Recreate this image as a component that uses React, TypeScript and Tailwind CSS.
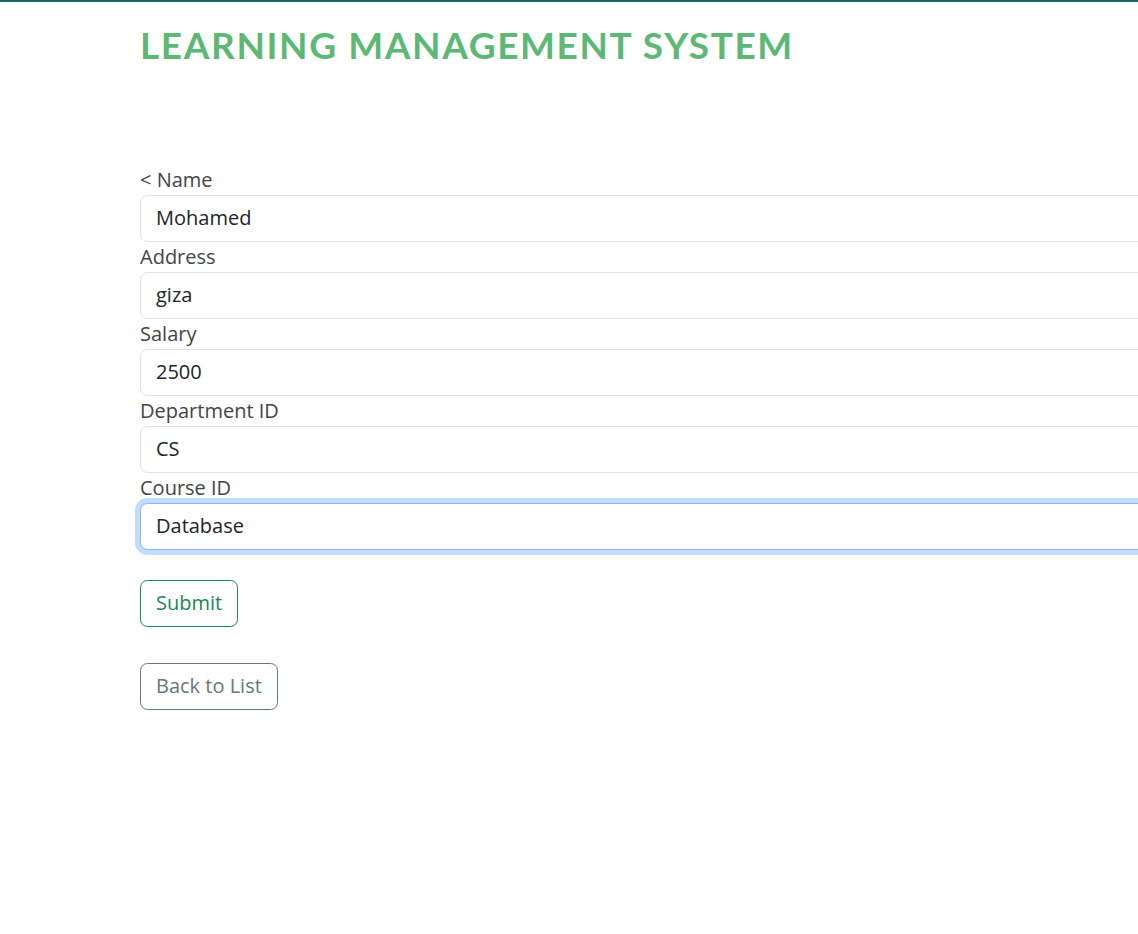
import React from "react";

const fields = [
  { label: "< Name", value: "Mohamed" },
  { label: "Address", value: "giza" },
  { label: "Salary", value: "2500" },
  { label: "Department ID", value: "CS" },
  { label: "Course ID", value: "Database", focus: true },
];

export default function App() {
  return (
    <div className="min-h-[934px] w-[1138px] overflow-hidden bg-white font-['Open_Sans',sans-serif] text-[20px] text-[#212529]">
      <div className="h-[2px] bg-[#1b6660]" />
      <div className="pl-[140px]">
        <h1 className="m-0 pt-[19px] font-['Lato',sans-serif] text-[37px] font-bold leading-[48px] tracking-[1.6px] text-[#5cb874]">
          LEARNING MANAGEMENT SYSTEM
        </h1>
        <form className="mt-[96px] w-[1100px]" onSubmit={(e) => e.preventDefault()}>
          {fields.map((f) => (
            <div key={f.label}>
              <label className="block leading-[30px] text-[#444444]">{f.label}</label>
              <input
                readOnly
                value={f.value}
                className={
                  f.focus
                    ? "block h-[47px] w-full rounded-[7.5px] border border-[#86b7fe] bg-white px-[15px] pb-[2px] text-[20px] leading-[30px] text-[#212529] shadow-[0_0_0_5px_rgba(13,110,253,0.25)] outline-none"
                    : "block h-[47px] w-full rounded-[7.5px] border border-[#dee2e6] bg-white px-[15px] pb-[2px] text-[20px] leading-[30px] text-[#212529] outline-none"
                }
              />
            </div>
          ))}
          <div className="mt-[30px]">
            <button
              type="submit"
              className="h-[47px] rounded-[7.5px] border border-[#198754] bg-white px-[15px] pb-[2px] text-[20px] leading-[30px] text-[#198754]"
            >
              Submit
            </button>
          </div>
        </form>
        <div className="mt-[36px]">
          <button className="h-[47px] rounded-[7.5px] border border-[#6c757d] bg-white px-[15px] pb-[2px] text-[20px] leading-[30px] text-[#6c757d]">
            Back to List
          </button>
        </div>
      </div>
    </div>
  );
}
